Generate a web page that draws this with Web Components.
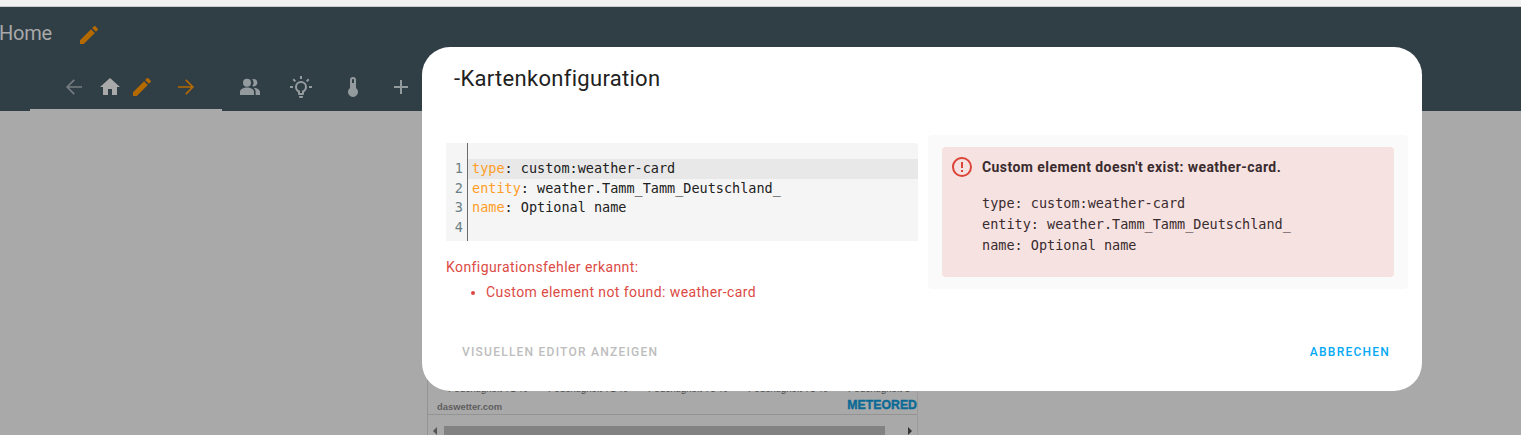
<!DOCTYPE html>
<html>
<head>
<meta charset="utf-8">
<style>
  html, body { margin: 0; height: 100%; overflow: hidden; background: #a9a9a9; }
  body { font-family: Roboto, "Liberation Sans", sans-serif; position: relative; }
</style>
</head>
<body>
<lovelace-header>
  <span slot="title">Home</span>
</lovelace-header>
<card-preview></card-preview>
<card-dialog>
  <span slot="title">-Kartenkonfiguration</span>
  <yaml-editor slot="left"></yaml-editor>
  <config-errors slot="left"></config-errors>
  <error-card slot="right"></error-card>
  <span slot="secondary">VISUELLEN EDITOR ANZEIGEN</span>
  <span slot="primary">ABBRECHEN</span>
</card-dialog>

<script>
const ICONS = {
  pencil: "M20.71,7.04C21.1,6.65 21.1,6 20.71,5.63L18.37,3.29C18,2.9 17.35,2.9 16.96,3.29L15.12,5.12L18.87,8.87M3,17.25V21H6.75L17.81,9.93L14.06,6.18L3,17.25Z",
  left: "M20,11.2V12.8H7L12.8,18.6L11.7,19.7L4,12L11.7,4.3L12.8,5.4L7,11.2H20Z",
  right: "M4,11.2V12.8H17L11.2,18.6L12.3,19.7L20,12L12.3,4.3L11.2,5.4L17,11.2H4Z",
  home: "M10,20V14H14V20H19V12H22L12,3L2,12H5V20H10Z",
  people: "M9,3.7A4,4 0 1,0 9,11.7A4,4 0 1,0 9,3.7ZM14.2,4.3A3.7,3.7 0 1,1 14.2,11.1A5.2,5.2 0 0,0 14.2,4.3ZM9,12.6C5.4,12.6 2,14.4 2,17V20H16V17C16,14.4 12.6,12.6 9,12.6ZM15.6,12.7C17,13.8 17.6,15.2 17.6,17V20H22V17C22,14.6 18.6,12.8 15.6,12.7Z",
  bulb: "M20,11H23V13H20V11M1,11H4V13H1V11M13,1V4H11V1H13M4.92,3.5L7.05,5.64L5.63,7.05L3.5,4.93L4.92,3.5M16.95,5.63L19.07,3.5L20.5,4.93L18.37,7.05L16.95,5.63M12,6A6,6 0 0,1 18,12C18,14.22 16.79,16.16 15,17.2V19A1,1 0 0,1 14,20H10A1,1 0 0,1 9,19V17.2C7.21,16.16 6,14.22 6,12A6,6 0 0,1 12,6M14,21V22A1,1 0 0,1 13,23H11A1,1 0 0,1 10,22V21H14M11,18H13V15.87C14.73,15.43 16,13.86 16,12A4,4 0 0,0 12,8A4,4 0 0,0 8,12C8,13.86 9.27,15.43 11,15.87V18Z",
  thermo: "M15,13V5A3,3 0 0,0 9,5V13A5,5 0 1,0 15,13M12,4A1,1 0 0,1 13,5V8H11V5A1,1 0 0,1 12,4Z",
  plus: "M19,13H13V19H11V13H5V11H11V5H13V11H19V13Z",
  alert: "M11,15H13V17H11V15M11,7H13V13H11V7M12,2C6.47,2 2,6.5 2,12A10,10 0 0,0 12,22A10,10 0 0,0 22,12A10,10 0 0,0 12,2M12,20A8,8 0 0,1 4,12A8,8 0 0,1 12,4A8,8 0 0,1 20,12A8,8 0 0,1 12,20Z"
};

class HaIcon extends HTMLElement {
  constructor() {
    super();
    this.attachShadow({ mode: "open" });
  }
  connectedCallback() {
    const size = this.getAttribute("size") || 24;
    this.shadowRoot.innerHTML = `
      <style>
        :host { display: inline-flex; width: ${size}px; height: ${size}px; flex: none; color: inherit; }
        svg { width: 100%; height: 100%; fill: currentColor; display: block; }
      </style>
      <svg viewBox="0 0 24 24"><path d="${ICONS[this.getAttribute("name")]}"></path></svg>
    `;
  }
}
customElements.define("ha-icon", HaIcon);

class LovelaceHeader extends HTMLElement {
  constructor() {
    super();
    this.attachShadow({ mode: "open" });
  }
  connectedCallback() {
    this.shadowRoot.innerHTML = `
      <style>
        :host { display: block; background: #f1f1f1; padding-top: 6px; }
        .bar { background: #303e46; border-top: 1px solid #c9cccd; height: 105px; box-sizing: border-box; color: #a9a9a9; }
        .top { height: 52px; display: flex; align-items: center; font-size: 20px; }
        .top .t { width: 78px; margin-left: -1px; letter-spacing: -.2px; }
        .top ha-icon { margin-top: 4px; }
        .edit { color: #b56a00; }
        .tabs { display: flex; height: 52px; }
        .active { margin-left: 30px; width: 192px; height: 52px; box-sizing: border-box; border-bottom: 2px solid #a9a9a9; padding: 6px 0 0 32px; display: flex; align-items: center; color: #a9a9a9; }
        .rest { display: flex; align-items: center; margin-left: 16px; color: #949b9f; padding-top: 6px; height: 44px; }
      </style>
      <div class="bar">
        <div class="top">
          <span class="t"><slot name="title"></slot></span>
          <ha-icon class="edit" name="pencil"></ha-icon>
        </div>
        <div class="tabs">
          <div class="active">
            <ha-icon name="left" style="color:#777e82"></ha-icon>
            <ha-icon name="home" style="margin-left:12px"></ha-icon>
            <ha-icon class="edit" name="pencil" style="margin-left:8px"></ha-icon>
            <ha-icon class="edit" name="right" style="margin-left:20px"></ha-icon>
          </div>
          <div class="rest">
            <ha-icon name="people"></ha-icon>
            <ha-icon name="bulb" style="margin-left:27px"></ha-icon>
            <ha-icon name="thermo" style="margin-left:28px"></ha-icon>
            <ha-icon name="plus" style="margin-left:24px"></ha-icon>
          </div>
        </div>
      </div>
    `;
  }
}
customElements.define("lovelace-header", LovelaceHeader);

// the weather card that peeks out under the dialog
class CardPreview extends HTMLElement {
  constructor() {
    super();
    this.attachShadow({ mode: "open" });
  }
  connectedCallback() {
    this.shadowRoot.innerHTML = `
      <style>
        :host { display: block; position: absolute; left: 427px; top: 380px; width: 491px; height: 55px; box-sizing: border-box; border-left: 1px solid #939393; border-right: 1px solid #9c9c9c; overflow: hidden; font-family: "Liberation Sans", sans-serif; }
        .hum { height: 14px; line-height: 18px; display: flex; padding-left: 20px; font-size: 10px; color: #4c4c4c; white-space: nowrap; overflow: hidden; }
        .hum span { width: 100px; flex: none; }
        .foot { height: 21px; border-bottom: 1px solid #939393; box-sizing: border-box; display: flex; align-items: center; justify-content: space-between; padding: 0 0 0 9px; font-size: 9.4px; font-weight: 700; color: #5e5e5e; }
        .site { margin-top: 5px; }
        .brand { margin-top: 2px; color: #0a6a96; font-size: 12.3px; font-weight: 700; white-space: nowrap; -webkit-text-stroke: .4px #0a6a96; }
        .scroll { margin-top: 11px; height: 9px; display: flex; align-items: center; }
        .arrow { width: 0; height: 0; border: 4px solid transparent; flex: none; }
        .arrow.l { border-right-color: #555; border-left-width: 0; margin-left: 5px; }
        .arrow.r { border-left-color: #333; border-right-width: 0; margin-left: 23px; }
        .thumb { margin-left: 7px; width: 441px; height: 9px; background: #828282; }
      </style>
      <div class="hum"><span>Feuchtigkeit 71 %</span><span>Feuchtigkeit 71 %</span><span>Feuchtigkeit 75 %</span><span>Feuchtigkeit 73 %</span><span>Feuchtigkeit 8</span></div>
      <div class="foot"><span class="site">daswetter.com</span><span class="brand">METEORED</span></div>
      <div class="scroll"><i class="arrow l"></i><div class="thumb"></div><i class="arrow r"></i></div>
    `;
  }
}
customElements.define("card-preview", CardPreview);

class CardDialog extends HTMLElement {
  constructor() {
    super();
    this.attachShadow({ mode: "open" });
  }
  connectedCallback() {
    this.shadowRoot.innerHTML = `
      <style>
        :host { display: block; position: absolute; left: 422px; top: 47px; width: 1000px; height: 344px; background: #fff; border-radius: 28px; color: #212121; }
        .title { font-size: 22px; line-height: 28px; letter-spacing: .3px; padding: 18px 0 0 32px; height: 70px; box-sizing: border-box; }
        .content { display: grid; grid-template-columns: 472px 480px; gap: 10px; padding: 18px 0 0 24px; height: 200px; box-sizing: border-box; }
        .left { padding-top: 8px; }
        .foot { display: flex; justify-content: space-between; padding: 27px 32px 0 40px; font-size: 12px; font-weight: 500; letter-spacing: 1.23px; line-height: 16px; }
        .sec { color: #bdbdbd; }
        .pri { color: #03a9f4; }
      </style>
      <div class="title"><slot name="title"></slot></div>
      <div class="content">
        <div class="left"><slot name="left"></slot></div>
        <div class="right"><slot name="right"></slot></div>
      </div>
      <div class="foot">
        <span class="sec"><slot name="secondary"></slot></span>
        <span class="pri"><slot name="primary"></slot></span>
      </div>
    `;
  }
}
customElements.define("card-dialog", CardDialog);

class YamlEditor extends HTMLElement {
  constructor() {
    super();
    this.attachShadow({ mode: "open" });
  }
  connectedCallback() {
    const lines = [
      ["type", " custom:weather-card"],
      ["entity", " weather.Tamm_Tamm_Deutschland_"],
      ["name", " Optional name"],
      ["", ""]
    ];
    const rows = lines.map(([k, v], i) => `
      <div class="row ${i === 0 ? "on" : ""}">
        <span class="num">${i + 1}</span>
        <span class="code">${k ? `<span class="key">${k}</span>:${v}` : ""}</span>
      </div>`).join("");
    this.shadowRoot.innerHTML = `
      <style>
        :host { display: block; background: #f5f5f5; height: 98px; padding-top: 16px; box-sizing: border-box; font-family: "DejaVu Sans Mono", monospace; font-size: 13.5px; color: #212121; position: relative; border-radius: 0 3px 0 0; }
        .gutter { position: absolute; left: 21px; top: 0; bottom: 0; width: 1px; background: #6b6b6b; }
        .row { display: flex; height: 19.6px; line-height: 19.6px; white-space: pre; }
        .row.on { background: #e8e8e8; }
        .num { width: 21px; box-sizing: border-box; padding-right: 4px; text-align: right; color: #6d8086; background: #f5f5f5; }
        .code { padding-left: 5px; }
        .key { color: #ff9d26; }
      </style>
      <div class="gutter"></div>
      ${rows}
    `;
  }
}
customElements.define("yaml-editor", YamlEditor);

class ConfigErrors extends HTMLElement {
  constructor() {
    super();
    this.attachShadow({ mode: "open" });
  }
  connectedCallback() {
    this.shadowRoot.innerHTML = `
      <style>
        :host { display: block; color: #dc4a44; font-size: 14px; letter-spacing: .42px; line-height: 20px; padding-top: 16px; }
        ul { margin: 5px 0 0; padding-left: 40px; }
      </style>
      <div>Konfigurationsfehler erkannt:</div>
      <ul><li>Custom element not found: weather-card</li></ul>
    `;
  }
}
customElements.define("config-errors", ConfigErrors);

class ErrorCard extends HTMLElement {
  constructor() {
    super();
    this.attachShadow({ mode: "open" });
  }
  connectedCallback() {
    this.shadowRoot.innerHTML = `
      <style>
        :host { display: block; background: #fafafa; border-radius: 4px; padding: 12px 14px; height: 154px; box-sizing: border-box; }
        .box { background: #f6e3e1; border-radius: 4px; height: 130px; padding: 8px 8px; box-sizing: border-box; display: flex; gap: 8px; color: #3a2b2f; }
        ha-icon { color: #db4437; }
        .head { font-size: 14px; font-weight: 700; line-height: 24px; letter-spacing: .43px; }
        pre { font-family: "DejaVu Sans Mono", monospace; font-size: 13.5px; line-height: 21px; margin: 14px 0 0; }
      </style>
      <div class="box">
        <ha-icon name="alert"></ha-icon>
        <div>
          <div class="head">Custom element doesn't exist: weather-card.</div>
          <pre>type: custom:weather-card
entity: weather.Tamm_Tamm_Deutschland_
name: Optional name</pre>
        </div>
      </div>
    `;
  }
}
customElements.define("error-card", ErrorCard);
</script>
</body>
</html>
